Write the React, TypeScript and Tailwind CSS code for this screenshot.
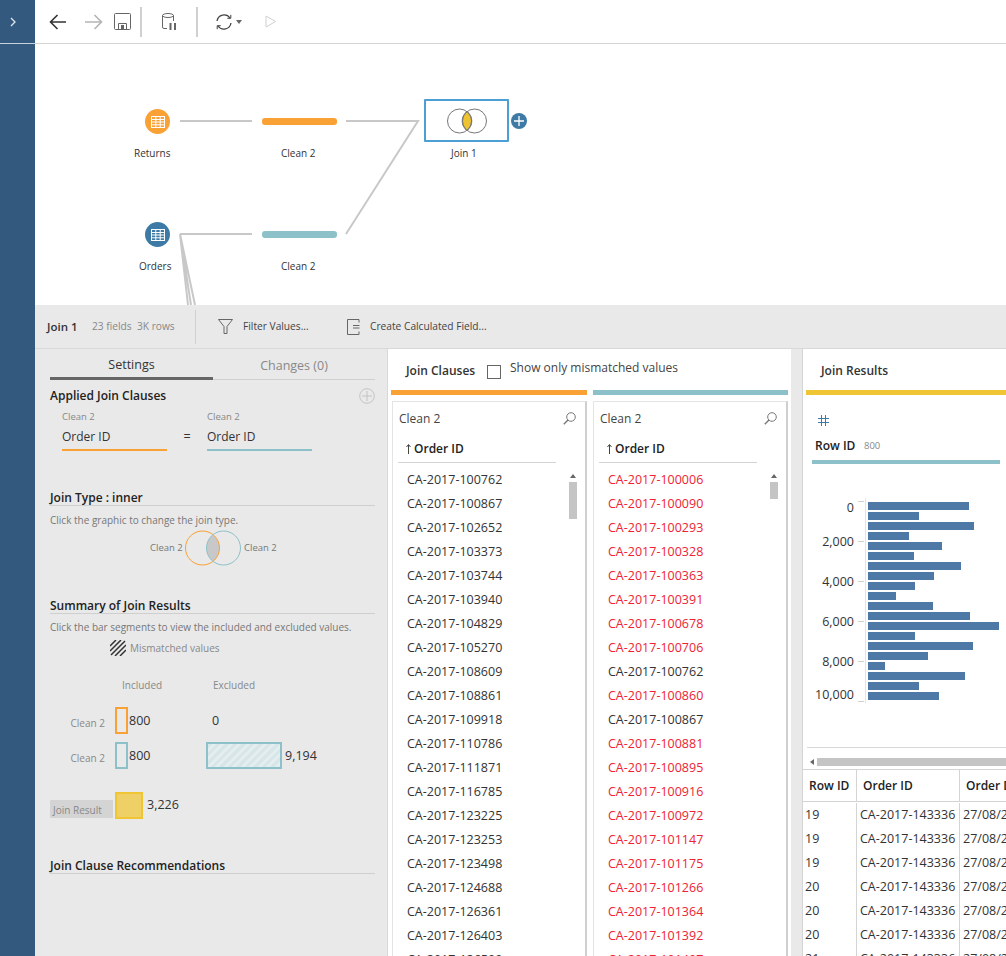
import { Fragment } from "react";

const leftIds = ["100762","100867","102652","103373","103744","103940","104829","105270","108609","108861","109918","110786","111871","116785","123225","123253","123498","124688","126361","126403","126599"];

const rightIds = ["100006","100090","100293","100328","100363","100391","100678","100706","100762","100860","100867","100881","100895","100916","100972","101147","101175","101266","101364","101392","101497"];
const matched = ["100762", "100867"];

const barWidths = [101,51,106,41,74,46,93,66,47,28,65,102,131,47,105,60,17,97,51,71];
const axis = [
  { label: "0", tick: 500, text: 511 },
  { label: "2,000", tick: 540, text: 545 },
  { label: "4,000", tick: 580, text: 585 },
  { label: "6,000", tick: 620, text: 625 },
  { label: "8,000", tick: 660, text: 665 },
  { label: "10,000", tick: 700, text: 698 },
];

const tableRows = ["19","19","19","20","20","20","21"];

const GridIcon = () => (
  <svg width="16" height="14" viewBox="0 0 16 14" fill="none" stroke="white" strokeWidth="1">
    <rect x="1.5" y="1.5" width="13" height="11" />
    <path d="M1.5 4.5h13M1.5 7h13M1.5 9.8h13M5.8 1.5v11M10.2 1.5v11" />
  </svg>
);

const SectionTitle = ({ title, className }: { title: string; className: string }) => (
  <div className={`border-b border-[#cfcfcf] h-[16px] leading-[15px] text-[12px] font-semibold text-[#222] ${className}`}>{title}</div>
);

const Toolbar = () => (
  <div className="h-[44px] shrink-0 border-b border-[#d4d4d4] flex items-center bg-white">
    {/* back / forward / save */}
    <svg className="ml-[14px]" width="18" height="16" viewBox="0 0 18 16" fill="none" stroke="#333" strokeWidth="1.6">
      <path d="M17 8H1.5M8.5 1 1.5 8l7 7" />
    </svg>
    <svg className="ml-[18px]" width="18" height="16" viewBox="0 0 18 16" fill="none" stroke="#b5b5b5" strokeWidth="1.6">
      <path d="M0 8h16M9.5 1l7 7-7 7" />
    </svg>
    <svg className="ml-[11px]" width="17" height="17" viewBox="0 0 17 17" fill="none" stroke="#666" strokeWidth="1">
      <path d="M1.5.5h14a1 1 0 0 1 1 1v14a1 1 0 0 1-1 1h-14a1 1 0 0 1-1-1v-14a1 1 0 0 1 1-1Z" />
      <path d="M4.5 16.5v-6h8v6" />
      <rect x="7" y="12" width="3" height="4" fill="#666" stroke="none" />
    </svg>
    <div className="ml-[9px] w-[2px] h-[30px] bg-[#d0d0d0]" />
    <svg className="ml-[20px]" width="15" height="18" viewBox="0 0 15 18" fill="none" stroke="#666" strokeWidth="1">
      <ellipse cx="6" cy="2.5" rx="5.5" ry="2" />
      <path d="M.5 2.5V14A1.5 1.5 0 0 0 2 15.5h3M11.5 2.5V8" />
      <path d="M8.5 10v7M13 10v7" strokeWidth="2" />
    </svg>
    <div className="ml-[19px] w-[2px] h-[30px] bg-[#d0d0d0]" />
    <svg className="ml-[17px]" width="18" height="18" viewBox="0 0 18 18" fill="none" stroke="#444" strokeWidth="1.3">
      <path d="M2 8a7.2 7.2 0 0 1 13-3M16 10a7.2 7.2 0 0 1-13 3" />
      <path d="M15.8 1.8v3.5h-3.5M2.2 16.2v-3.5h3.5" strokeWidth="1" />
    </svg>
    <svg className="ml-[3px]" width="6" height="4" viewBox="0 0 6 4"><path d="M0 0h6L3 4Z" fill="#666" /></svg>
    <svg className="ml-[23px]" width="12" height="13" viewBox="0 0 12 13" fill="none" stroke="#cfcfcf">
      <path d="M1 1l9.5 5.5L1 12Z" />
    </svg>
  </div>
);

const FlowCanvas = () => (
  <div className="relative h-[261px] shrink-0 bg-white overflow-hidden">
    <svg className="absolute left-0 top-0" width="971" height="261" fill="none" stroke="#c8c8c8" strokeWidth="2">
      <path d="M145 77h72M311 77h72L311 190M145 190h72" />
      <path d="M145 190 153 261M145 190 156 261M145 190 160 261" />
    </svg>
    <div className="absolute left-[110px] top-[65px] w-[25px] h-[25px] rounded-full bg-[#f9a134] flex items-center justify-center"><GridIcon /></div>
    <div className="absolute left-[110px] top-[178px] w-[25px] h-[25px] rounded-full bg-[#3d7ba6] flex items-center justify-center"><GridIcon /></div>
    <div className="absolute left-[227px] top-[74px] w-[75px] h-[7px] rounded-[3px] bg-[#f9a134]" />
    <div className="absolute left-[227px] top-[187px] w-[75px] h-[7px] rounded-[3px] bg-[#8dc1c9]" />
    <span className="absolute left-[99px] top-[102px] text-[10px] leading-[14px] text-[#333]">Returns</span>
    <span className="absolute left-[246px] top-[102px] text-[10px] leading-[14px] text-[#333]">Clean 2</span>
    <span className="absolute left-[104px] top-[215px] text-[10px] leading-[14px] text-[#333]">Orders</span>
    <span className="absolute left-[246px] top-[215px] text-[10px] leading-[14px] text-[#333]">Clean 2</span>
    <span className="absolute left-[416px] top-[102px] text-[10px] leading-[14px] text-[#333]">Join 1</span>
    <div className="absolute left-[389px] top-[55px] w-[85px] h-[43px] border-2 border-[#4b9fd5] rounded-[1px] flex items-center justify-center bg-white">
      <svg width="42" height="26" viewBox="0 0 42 26" fill="none" stroke="#777" strokeWidth="1">
        <path d="M21 3.4A12 12 0 0 1 21 22.6A12 12 0 0 1 21 3.4Z" fill="#efc22f" />
        <circle cx="13.5" cy="13" r="12" />
        <circle cx="28.5" cy="13" r="12" />
      </svg>
    </div>
    <div className="absolute left-[476px] top-[69px] w-[16px] h-[16px] rounded-full bg-[#3d7ba6] flex items-center justify-center">
      <svg width="10" height="10" viewBox="0 0 10 10" stroke="white" strokeWidth="1.3"><path d="M5 0v10M0 5h10" /></svg>
    </div>
  </div>
);

const ActionBar = () => (
  <div className="h-[44px] shrink-0 bg-[#e9e9e9] border-b border-[#d8d8d8] flex items-center text-[10.2px] text-[#444]">
    <span className="ml-[12px] w-[45px] text-[11.5px] font-semibold text-[#333]">Join 1</span>
    <span className="w-[103px] text-[#888] pt-px">23 fields&nbsp; 3K rows</span>
    <div className="w-px h-[34px] bg-[#d0d0d0]" />
    <svg className="ml-[22px]" width="15" height="15" viewBox="0 0 15 15" fill="none" stroke="#666">
      <path d="M.5.5h14L9 7.5v7H6v-7Z" />
    </svg>
    <span className="ml-[10px] w-[104px] pt-px">Filter Values...</span>
    <svg width="13" height="16" viewBox="0 0 13 16" fill="none" stroke="#666">
      <path d="M12 3.5v-3H.5v15H12v-3M6 6.5h6.5M6 9h6.5" />
    </svg>
    <span className="ml-[10px] pt-px">Create Calculated Field...</span>
  </div>
);

const SettingsPanel = () => (
  <div className="w-[352px] shrink-0 pl-[15px] pr-[12px] text-[#555]">
    <div className="flex h-[31px] text-[12.5px] text-[#333] border-b border-[#cfcfcf]">
      <div className="w-[163px] text-center leading-[32px] border-b-[3px] border-[#666] h-[31px]">Settings</div>
      <div className="w-[162px] text-center leading-[34px] text-[#888]">Changes (0)</div>
    </div>
    <div className="flex items-center justify-between mt-[8px] h-[15px]">
      <span className="text-[12px] font-semibold text-[#222] leading-[15px]">Applied Join Clauses</span>
      <svg width="16" height="16" viewBox="0 0 16 16" fill="none" stroke="#c4c4c4">
        <circle cx="8" cy="8" r="7.3" />
        <path d="M3 8h10M8 3v10" />
      </svg>
    </div>
    <div className="flex ml-[12px] mt-[8px]">
      <div className="w-[105px] border-b-2 border-[#f9a134] h-[40px]">
        <div className="text-[9.5px] leading-[12px] text-[#888]">Clean 2</div>
        <div className="text-[12px] leading-[16px] mt-[6px] text-[#333]">Order ID</div>
      </div>
      <div className="w-[40px] text-center text-[12.5px] text-[#333] leading-[16px] mt-[18px]">=</div>
      <div className="w-[105px] border-b-2 border-[#8dc1c9] h-[40px]">
        <div className="text-[9.5px] leading-[12px] text-[#888]">Clean 2</div>
        <div className="text-[12px] leading-[16px] mt-[6px] text-[#333]">Order ID</div>
      </div>
    </div>
    <SectionTitle title="Join Type : inner" className="mt-[39px]" />
    <div className="text-[10px] leading-[12px] mt-[8px] text-[#777]">Click the graphic to change the join type.</div>
    <div className="flex items-center text-[9.5px] text-[#777] ml-[100px] mt-[4px]">
      <span className="w-[35px]">Clean 2</span>
      <svg width="59" height="36" viewBox="0 0 59 36" fill="none">
        <path d="M28 4.63A17 17 0 0 1 28 31.37A17 17 0 0 1 28 4.63Z" fill="#c8c8c8" />
        <circle cx="17.5" cy="18" r="17" stroke="#f9a134" />
        <circle cx="38.5" cy="18" r="17" stroke="#8dc1c9" />
      </svg>
      <span>Clean 2</span>
    </div>
    <SectionTitle title="Summary of Join Results" className="mt-[32px]" />
    <div className="text-[10px] leading-[12px] mt-[7px] text-[#777]">Click the bar segments to view the included and excluded values.</div>
    <div className="flex items-center ml-[60px] mt-[7px] h-[16px]">
      <svg width="16" height="16" viewBox="0 0 16 16" stroke="#333" strokeWidth="1.5">
        <path d="M0 6 6 0M0 11 11 0M1 15 15 1M5 16 16 5M10 16l6-6" />
      </svg>
      <span className="ml-[4px] text-[10px] text-[#888]">Mismatched values</span>
    </div>
    <div className="flex text-[10px] leading-[12px] text-[#888] mt-[23px] h-[12px]">
      <span className="ml-[72px] w-[91px]">Included</span>
      <span>Excluded</span>
    </div>
    <div className="flex items-start mt-[16px] h-[26px]">
      <span className="w-[55px] text-right text-[10px] text-[#888] mt-[10px] leading-[12px]">Clean 2</span>
      <div className="ml-[10px] w-[13px] h-[27px] border-2 border-[#f9a134]" />
      <span className="ml-px w-[83px] text-[12.5px] text-[#333] leading-[27px]">800</span>
      <span className="text-[12.5px] text-[#333] leading-[27px]">0</span>
    </div>
    <div className="flex items-start mt-[9px] h-[27px]">
      <span className="w-[55px] text-right text-[10px] text-[#888] mt-[10px] leading-[12px]">Clean 2</span>
      <div className="ml-[10px] w-[13px] h-[27px] border-2 border-[#8dc1c9]" />
      <span className="ml-px w-[77px] text-[12.5px] text-[#333] leading-[27px]">800</span>
      <div className="w-[76px] h-[27px] border-2 border-[#8dc1c9] bg-[repeating-linear-gradient(135deg,#d6e6e9_0px,#d6e6e9_3px,#e4eeef_3px,#e4eeef_6px)]" />
      <span className="ml-[3px] text-[12.5px] text-[#333] leading-[27px]">9,194</span>
    </div>
    <div className="flex items-center mt-[23px] h-[27px]">
      <div className="w-[63px] h-[18px] mt-[7px] bg-[#d4d4d4] text-[10px] leading-[20px] pl-[3px] text-[#888]">Join Result</div>
      <div className="ml-[2px] w-[28px] h-[27px] border-2 border-[#f0c534] bg-[#eed067]" />
      <span className="ml-[4px] text-[12.5px] text-[#333]">3,226</span>
    </div>
    <SectionTitle title="Join Clause Recommendations" className="mt-[39px]" />
  </div>
);

const IdList = ({ ids, mark, className }: { ids: string[]; mark: boolean; className: string }) => (
  <div className={`flex-1 mt-[6px] min-h-0 bg-white border border-b-0 border-[#e4e4e4] border-r-2 border-r-[#cfcfcf] pl-[5px] pr-[5px] overflow-hidden ${className}`}>
    <div className="flex items-center justify-between h-[33px] pl-px pr-[4px] text-[12px] text-[#444]">
      <span>Clean 2</span>
      <svg width="13" height="13" viewBox="0 0 13 13" fill="none" stroke="#777" strokeWidth="1">
        <circle cx="8" cy="5" r="4.3" />
        <path d="M5 8 .8 12.2" strokeWidth="1.4" />
      </svg>
    </div>
    <div className="w-[158px] h-[28px] border-b border-[#d4d4d4] flex items-center text-[12px] font-semibold text-[#222] pl-[8px] pt-px">
      <svg className="mr-[3px]" width="5" height="10" viewBox="0 0 5 10" stroke="#444"><path d="M2.5 10V1M.5 3l2-2.5L4.5 3" fill="none" /></svg>
      Order ID
    </div>
    <div className="flex">
      <div className="w-[171px] pl-[9px] pt-[5px] shrink-0">
        {ids.map((id) => (
          <div
            key={id}
            className={`h-[24px] leading-[24px] text-[12.5px] ${mark && !matched.includes(id) ? "text-[#ee2233]" : "text-[#333]"}`}
          >
            CA-2017-{id}
          </div>
        ))}
      </div>
      <div className="pt-[11px]">
        <svg className="ml-px" width="6" height="4" viewBox="0 0 6 4"><path d="M3 0l3 4H0Z" fill="#666" /></svg>
        <div className={`w-[8px] mt-[4px] bg-[#c4c4c4] ${mark ? "h-[17px]" : "h-[37px]"}`} />
      </div>
    </div>
  </div>
);

const ClausesPanel = () => (
  <div className="w-[404px] shrink-0 bg-white border-l border-[#d8d8d8] flex flex-col min-h-0 pl-[3px]">
    <div className="flex h-[41px] text-[12px] text-[#333] pl-[15px]">
      <span className="font-semibold leading-[44px] w-[81px]">Join Clauses</span>
      <div className="w-[14px] h-[14px] border border-[#666] mt-[16px]" />
      <span className="ml-[9px] font-medium leading-[38px] text-[#444]">Show only mismatched values</span>
    </div>
    <div className="flex gap-[6px] flex-1 min-h-0 w-[397px]">
      <div className="w-[196px] flex flex-col min-h-0">
        <div className="h-[5px] bg-[#f9a134] shrink-0" />
        <IdList ids={leftIds} mark={false} className="ml-px" />
      </div>
      <div className="w-[195px] flex flex-col min-h-0">
        <div className="h-[5px] bg-[#8dc1c9] shrink-0" />
        <IdList ids={rightIds} mark className="" />
      </div>
    </div>
  </div>
);

const RowChart = () => (
  <svg className="block" width="203" height="230" viewBox="803 480 203 230" fontSize="12.5" fill="#333">
    <path d="M865.5 497V702" stroke="#e4e4e4" fill="none" />
    {axis.map((a) => (
      <Fragment key={a.label}>
        <path d={`M858 ${a.tick + 0.5}h6`} stroke="#d0d0d0" fill="none" />
        <text x="854" y={a.text} textAnchor="end">{a.label}</text>
      </Fragment>
    ))}
    {barWidths.map((w, i) => (
      <rect key={i} x="868" y={501 + i * 10} width={w} height="8" fill="#4e79a7" />
    ))}
  </svg>
);

const ResultsPanel = () => (
  <div className="flex-1 min-w-0 bg-white border-l border-[#d4d4d4] flex flex-col min-h-0 overflow-hidden">
    <div className="h-[41px] pl-[18px] text-[12px] font-semibold text-[#333] leading-[44px] shrink-0">Join Results</div>
    <div className="h-[5px] bg-[#f0c534] ml-[3px] shrink-0" />
    <svg className="ml-[15px] mt-[20px] shrink-0" width="11" height="11" viewBox="0 0 11 11" stroke="#3d7ba6">
      <path d="M3.5 0v11M7.5 0v11M0 3.5h11M0 7.5h11" />
    </svg>
    <div className="flex items-center ml-[12px] h-[20px] mt-[10px] shrink-0">
      <span className="w-[49px] text-[12px] font-semibold text-[#222]">Row ID</span>
      <span className="text-[9.5px] text-[#888]">800</span>
    </div>
    <div className="h-[4px] ml-[9px] w-[188px] mt-[4px] bg-[#8dc1c9] shrink-0" />
    <div className="mt-[17px] shrink-0"><RowChart /></div>
    <div className="ml-[4px] border-t border-[#d8d8d8] mt-[36px] h-px shrink-0" />
    <div className="flex items-center h-[21px] pt-[7px] ml-[6px] shrink-0">
      <svg className="ml-px" width="4" height="6" viewBox="0 0 4 6"><path d="M4 0v6L0 3Z" fill="#666" /></svg>
      <div className="ml-[3px] flex-1 h-[8px] bg-[#c4c4c4]" />
    </div>
    <div className="flex-1 min-h-0 border-t border-[#d4d4d4] w-[300px]">
      <div className="flex h-[32px] border-b border-[#d4d4d4] text-[12px] font-semibold text-[#222] leading-[32px]">
        <div className="w-[54px] pl-[6px] border-r border-[#d4d4d4]">Row ID</div>
        <div className="w-[103px] pl-[6px] border-r border-[#d4d4d4]">Order ID</div>
        <div className="pl-[6px]">Order Date</div>
      </div>
      <div className="flex text-[12.5px] text-[#333] leading-[24px] pt-px">
        <div className="w-[54px] pl-[2px] border-r border-[#d4d4d4]">
          {tableRows.map((r, i) => <div key={i} className="h-[24px]">{r}</div>)}
        </div>
        <div className="w-[103px] pl-[3px] border-r border-[#d4d4d4]">
          {tableRows.map((_, i) => <div key={i} className="h-[24px]">CA-2017-143336</div>)}
        </div>
        <div className="pl-[3px]">
          {tableRows.map((_, i) => <div key={i} className="h-[24px]">27/08/2017</div>)}
        </div>
      </div>
    </div>
  </div>
);

export default function App() {
  return (
    <div className="flex w-[1006px] h-[956px] overflow-hidden bg-[#e9e9e9] font-['Open_Sans',sans-serif]">
      <div className="w-[35px] shrink-0 bg-[#34597f]">
        <div className="h-[44px] border-b border-[#c9d3dd] flex items-center pl-[10px]">
          <svg width="6" height="10" viewBox="0 0 6 10" fill="none" stroke="#dfe6ee" strokeWidth="1.3"><path d="M1 1l4 4-4 4" /></svg>
        </div>
      </div>
      <div className="flex-1 min-w-0 flex flex-col">
        <Toolbar />
        <FlowCanvas />
        <ActionBar />
        <div className="flex-1 min-h-0 flex overflow-hidden">
          <SettingsPanel />
          <ClausesPanel />
          <div className="w-[11px] shrink-0" />
          <ResultsPanel />
        </div>
      </div>
    </div>
  );
}
